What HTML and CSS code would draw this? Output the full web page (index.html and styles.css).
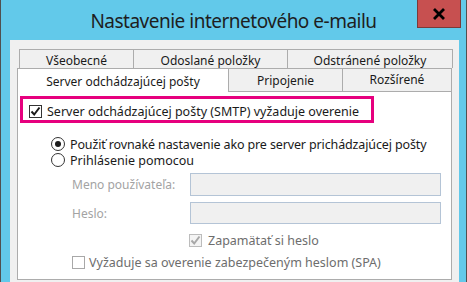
FILE: index.html
```html
<!DOCTYPE html>
<html lang="sk">
<head>
<meta charset="utf-8">
<link rel="stylesheet" href="styles.css">
</head>
<body>
<div class="window">
  <div class="titlebar">
    <span class="title">Nastavenie internetového e-mailu</span>
    <div class="close">
      <svg width="14" height="12" viewBox="0 0 14 12"><path d="M2 1 L12 11 M12 1 L2 11" stroke="#000" stroke-width="2.8" fill="none"/></svg>
    </div>
  </div>
  <div class="panel">
    <div class="tabrow row1">
      <div class="tab w1">Všeobecné</div>
      <div class="tab w2">Odoslané položky</div>
      <div class="tab w3">Odstránené položky</div>
    </div>
    <div class="tabrow row2">
      <div class="tab selected">Server odchádzajúcej pošty</div>
      <div class="tab w5">Pripojenie</div>
      <div class="tab w6">Rozšírené</div>
    </div>
    <div class="content">
      <div class="highlight">
        <span class="cb checked"><svg width="11" height="11" viewBox="0 0 11 11"><path d="M1.5 5.5 L4.2 8.5 L9.5 1.5" stroke="#1a1a1a" stroke-width="2" fill="none"/></svg></span>
        <span class="label">Server odchádzajúcej pošty (SMTP) vyžaduje overenie</span>
      </div>
      <div class="opt first"><span class="radio on"></span><span class="label tight">Použiť rovnaké nastavenie ako pre server prichádzajúcej pošty</span></div>
      <div class="opt"><span class="radio"></span><span class="label">Prihlásenie pomocou</span></div>
      <div class="field f1"><span class="flabel">Meno používateľa:</span><span class="input"></span></div>
      <div class="field f2"><span class="flabel">Heslo:</span><span class="input"></span></div>
      <div class="check remember"><span class="cb disabled"><svg width="11" height="11" viewBox="0 0 11 11"><path d="M1.5 5.5 L4.2 8.5 L9.5 1.5" stroke="#a8a8a8" stroke-width="2" fill="none"/></svg></span><span class="label">Zapamätať si heslo</span></div>
      <div class="check spa"><span class="cb empty"></span><span class="label">Vyžaduje sa overenie zabezpečeným heslom (SPA)</span></div>
    </div>
  </div>
</div>
</body>
</html>
```

FILE: styles.css
```css
html, body {
  margin: 0;
  padding: 0;
}
body {
  width: 467px;
  height: 282px;
  overflow: hidden;
  font-family: "Noto Sans", sans-serif;
}
.window {
  box-sizing: border-box;
  width: 467px;
  height: 282px;
  background: #62c9ea;
  border-left: 1px solid #505050;
  border-right: 1px solid #505050;
  overflow: hidden;
}
.titlebar {
  position: relative;
  height: 40px;
}
.title {
  display: block;
  text-align: center;
  font-family: "Noto Sans", sans-serif;
  font-size: 19px;
  letter-spacing: -0.5px;
  line-height: 24px;
  padding-top: 9px;
  color: #1e1e1e;
}
.close {
  position: absolute;
  top: 0;
  right: 5px;
  width: 44px;
  height: 28px;
  box-sizing: border-box;
  background: #c75050;
  border: 1px solid #7a3a3a;
  border-top: none;
  display: flex;
  align-items: center;
  justify-content: center;
}
.panel {
  box-sizing: border-box;
  margin-left: 9px;
  width: 449px;
  height: 242px;
  background: #f0f0f0;
  padding-top: 9px;
}
.tabrow {
  display: flex;
  font-size: 12px;
  color: #1a1a1a;
}
.tab {
  box-sizing: border-box;
  border-left: 1px solid #acacac;
  border-top: 1px solid #acacac;
  background: #f0f0f0;
  display: flex;
  align-items: center;
  justify-content: center;
}
.tab:last-child {
  border-right: 1px solid #acacac;
}
.row1 {
  margin-left: 9px;
  height: 19px;
}
.row1 .tab { height: 19px; padding-top: 2px; }
.w1 { width: 114px; }
.w2 { width: 154px; }
.w3 { width: 166px; }
.row2 {
  margin-left: 7px;
  height: 23px;
}
.row2 .tab { height: 23px; }
.selected {
  width: 211px;
  height: 24px !important;
  background: #fff;
  position: relative;
  z-index: 1;
  padding-top: 1px;
}
.w5 { width: 114px; padding-top: 1px; }
.w6 { width: 110px; padding-bottom: 2px; }
.content {
  box-sizing: border-box;
  margin-left: 7px;
  width: 435px;
  height: 189px;
  background: #fff;
  border: 1px solid #acacac;
  font-size: 12.5px;
  color: #1a1a1a;
}
.highlight {
  box-sizing: border-box;
  margin: 4px 0 0 2px;
  width: 354px;
  height: 27px;
  border: 3px solid #e6007e;
  display: flex;
  align-items: center;
  padding: 3px 0 0 6px;
  gap: 5px;
}
.cb {
  box-sizing: border-box;
  width: 13px;
  height: 13px;
  border: 1px solid #333;
  background: #fff;
  display: flex;
  align-items: center;
  justify-content: center;
  flex: none;
}
.cb.disabled {
  border-color: #bcbcbc;
  background: #f4f4f4;
}
.cb.empty {
  border-color: #a8a8a8;
}
.opt {
  display: flex;
  align-items: center;
  height: 16px;
  margin-left: 33px;
  gap: 5px;
}
.opt.first { margin-top: 13px; }
.tight { letter-spacing: -0.13px; }
.radio {
  box-sizing: border-box;
  width: 14px;
  height: 14px;
  border: 1px solid #333;
  border-radius: 50%;
  background: #fff;
  display: flex;
  align-items: center;
  justify-content: center;
  flex: none;
}
.radio.on::after {
  content: "";
  width: 6px;
  height: 6px;
  border-radius: 50%;
  background: #1a1a1a;
}
.field {
  display: flex;
  align-items: center;
  margin-left: 54px;
}
.f1 { margin-top: 5px; height: 23px; }
.f2 { margin-top: 6px; height: 22px; }
.flabel {
  width: 118px;
  font-size: 12px;
  color: #a3a3a3;
}
.input {
  box-sizing: border-box;
  width: 251px;
  height: 100%;
  background: #f0f0f0;
  border: 1px solid #b4c4d6;
}
.check {
  display: flex;
  align-items: center;
  height: 16px;
  color: #6d6d6d;
}
.remember { margin: 8px 0 0 171px; gap: 6px; }
.spa { margin: 6px 0 0 54px; gap: 4px; }
```
